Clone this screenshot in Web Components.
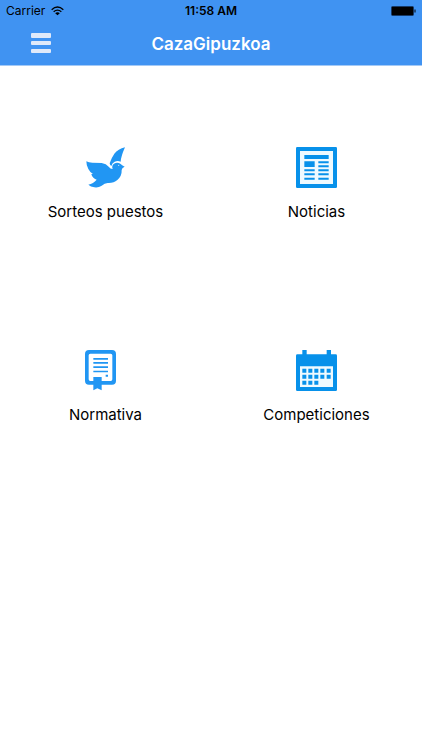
<!DOCTYPE html>
<html lang="es">
<head>
<meta charset="utf-8">
<meta name="viewport" content="width=device-width, initial-scale=1">
<title>CazaGipuzkoa</title>
<style>
    body {
        margin: 0;
        background: #fff;
        color: #000;
        font-family: Inter, "Liberation Sans", sans-serif;
        --bar: #4093f2;
        --icon: #2196f3;
        --icon-deep: #0791ea;
    }
</style>
</head>
<body>
<status-bar>
    <span slot="carrier">Carrier</span>
    <span slot="time">11:58 AM</span>
</status-bar>
<nav-bar>CazaGipuzkoa</nav-bar>
<home-menu>
    <menu-tile icon="bird" href="#sorteos">Sorteos puestos</menu-tile>
    <menu-tile icon="news" href="#noticias">Noticias</menu-tile>
    <menu-tile icon="rules" href="#normativa">Normativa</menu-tile>
    <menu-tile icon="calendar" href="#competiciones">Competiciones</menu-tile>
</home-menu>

<script>
class StatusBar extends HTMLElement {
    constructor() {
        super();
        this.attachShadow({ mode: 'open' });
    }

    connectedCallback() {
        this.shadowRoot.innerHTML = `
        <style>
            :host {
                display: grid;
                grid-template-columns: 1fr auto 1fr;
                align-items: center;
                height: 22px;
                padding: 0 6px;
                background: var(--bar);
                font-size: 12px;
                line-height: 22px;
            }
            .left { display: flex; align-items: center; gap: 6px; }
            .time { font-weight: 600; }
            .battery { justify-self: end; }
            svg { display: block; }
        </style>
        <div class="left">
            <slot name="carrier"></slot>
            <svg width="13" height="10" viewBox="0 0 39 30" fill="none" stroke="#000" stroke-width="4">
                <path d="M2 11 Q19.500 -5 37 11"/>
                <path d="M8 17.500 Q19.500 7.500 31 17.500"/>
                <path d="M19.500 28 L12.500 21.500 Q19.500 16 26.500 21.500 Z" fill="#000" stroke="none"/>
            </svg>
        </div>
        <div class="time"><slot name="time"></slot></div>
        <svg class="battery" width="25" height="10" viewBox="0 0 25 10">
            <rect x="0.500" y="0.500" width="22" height="9" rx="1" fill="#000" stroke="#173a66"/>
            <path d="M23.500 3.500 h1 v3 h-1 z" fill="#000"/>
        </svg>
        `;
    }
}

class NavBar extends HTMLElement {
    constructor() {
        super();
        this.attachShadow({ mode: 'open' });
    }

    connectedCallback() {
        this.shadowRoot.innerHTML = `
        <style>
            :host {
                display: grid;
                grid-template-columns: 1fr auto 1fr;
                align-items: center;
                height: 43px;
                padding: 0 20px;
                background: var(--bar);
                border-bottom: 1px solid #a3c9f6;
                color: #fff;
            }
            button {
                justify-self: start;
                padding: 10px;
                border: 0;
                background: none;
                cursor: pointer;
            }
            svg { display: block; }
            h1 {
                margin: 0;
                font-size: 17px;
                line-height: 22px;
                font-weight: 600;
            }
        </style>
        <button type="button" aria-label="Menú">
            <svg width="22" height="22" viewBox="0 0 22 22" fill="#dfe9fa">
                <rect x="1" y="0" width="20" height="5" rx="1"/>
                <rect x="1" y="8" width="20" height="4" rx="1"/>
                <rect x="1" y="16" width="20" height="4" rx="1"/>
            </svg>
        </button>
        <h1><slot></slot></h1>
        `;
    }
}

class HomeMenu extends HTMLElement {
    constructor() {
        super();
        this.attachShadow({ mode: 'open' });
    }

    connectedCallback() {
        this.shadowRoot.innerHTML = `
        <style>
            :host {
                display: grid;
                grid-template-columns: 1fr 1fr;
                row-gap: 128px;
                padding: 81px 0;
            }
        </style>
        <slot></slot>
        `;
    }
}

const ICONS = {
    bird: `
        <path fill="var(--icon)" d="M4 43 Q11 47 22 47 L50 48 Q64 50 71 59 Q76 66 83 66 Q79 55 87 50 Q97 44 107 51 Q110 55 119 59 Q111 62 110 69 Q111 87 97 99 Q86 109 68 108 Q59 109 50 116 Q40 123 28 121 Q17 119 10 113 Q25 110 35 98 Q22 94 19 81 L24 81 Q15 76 10 66 Q4 56 4 43 Z"/>
        <path fill="var(--icon)" d="M120 1 Q99 6 88 20 Q79 33 74 49 Q75 55 79 57 Q81 48 89 44 Q98 40 107 44 Q108 28 120 1 Z"/>
        <circle cx="101" cy="55" r="2" fill="#bfe0fb"/>`,
    news: `
        <rect width="123" height="123" rx="4" fill="var(--icon-deep)"/>
        <path fill="#eefaff" d="M12 12 h99 v99 h-99 z"/>
        <path fill="var(--icon-deep)" d="M25 24 h73 v12 h-73 z M25 43 h31 v17 h-31 z M67 43 h31 v6 h-31 z M67 55 h31 v6 h-31 z M25 67 h31 v6 h-31 z M67 67 h31 v6 h-31 z M25 79 h31 v6 h-31 z M67 79 h31 v6 h-31 z M25 92 h31 v6 h-31 z M67 92 h31 v6 h-31 z"/>`,
    rules: `
        <path fill="var(--icon)" fill-rule="evenodd" d="M12 0 H81 Q93 0 93 12 V92 Q93 104 81 104 H50 V121 L37 115 L25 121 V104 H12 Q0 104 0 92 V12 Q0 0 12 0 Z M16 11 Q11 11 11 16 V88 Q11 93 16 93 H25 V81 H50 V93 H77 Q82 93 82 88 V16 Q82 11 77 11 Z"/>
        <path fill="var(--icon)" d="M25 24 h44 v5 h-44 z M25 36 h44 v5 h-44 z M25 49 h44 v5 h-44 z M25 62 h44 v5 h-44 z M62 74 h7 v6 h-7 z"/>`,
    calendar: `
        <path fill="var(--icon-deep)" d="M4 13 H19 V0 H32 V13 H92 V0 H105 V13 H119 Q123 13 123 17 V119 Q123 123 119 123 H4 Q0 123 0 119 V17 Q0 13 4 13 Z"/>
        <path fill="#eefaff" d="M12 49 h99 v62 h-99 z"/>
        <path fill="var(--icon-deep)" d="M19 56 h12 v12 h-12 z M37 56 h12 v12 h-12 z M55 56 h12 v12 h-12 z M73 56 h12 v12 h-12 z M92 56 h12 v12 h-12 z M19 74 h12 v12 h-12 z M37 74 h12 v12 h-12 z M55 74 h12 v12 h-12 z M73 74 h12 v12 h-12 z M92 74 h12 v12 h-12 z M19 92 h12 v12 h-12 z M37 92 h12 v12 h-12 z M55 92 h12 v12 h-12 z"/>`
};

class MenuTile extends HTMLElement {
    constructor() {
        super();
        this.attachShadow({ mode: 'open' });
    }

    connectedCallback() {
        this.shadowRoot.innerHTML = `
        <style>
            :host { display: block; }
            a {
                display: flex;
                flex-direction: column;
                align-items: center;
                gap: 14px;
                color: inherit;
                text-decoration: none;
                font-size: 15px;
                line-height: 20px;
            }
            svg { display: block; }
        </style>
        <a href="${this.getAttribute('href')}">
            <svg width="41" height="41" viewBox="0 0 123 123" aria-hidden="true">${ICONS[this.getAttribute('icon')]}</svg>
            <span><slot></slot></span>
        </a>
        `;
    }
}

customElements.define('status-bar', StatusBar);
customElements.define('nav-bar', NavBar);
customElements.define('home-menu', HomeMenu);
customElements.define('menu-tile', MenuTile);
</script>
</body>
</html>
